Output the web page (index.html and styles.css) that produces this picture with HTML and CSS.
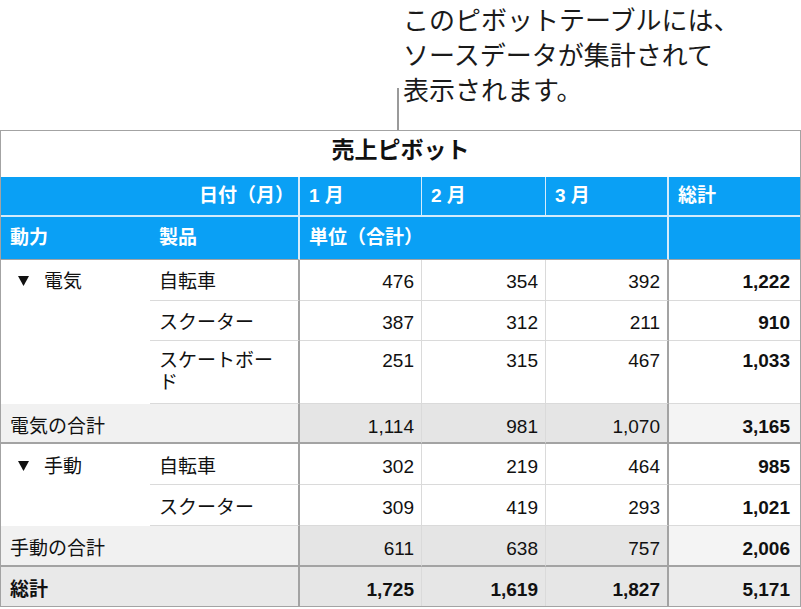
FILE: index.html
```html
<!DOCTYPE html>
<html lang="ja">
<head>
<meta charset="utf-8">
<title>売上ピボット</title>
<link rel="stylesheet" href="styles.css">
</head>
<body>
<div class="callout">
  <div class="leader"></div>
  <p class="callout-text">このピボットテーブルには、<br>ソースデータが集計されて<br>表示されます。</p>
</div>
<div class="pivot">
  <div class="c title">売上ピボット</div>

  <div class="c h h1 span2 right sep-l">日付（月）</div>
  <div class="c h h1 sep-s">1 月</div>
  <div class="c h h1 sep-s">2 月</div>
  <div class="c h h1 sep-l">3 月</div>
  <div class="c h h1">総計</div>

  <div class="c h h2">動力</div>
  <div class="c h h2 sep-l">製品</div>
  <div class="c h h2 span3 sep-l">単位（合計）</div>
  <div class="c h h2"></div>

  <div class="c group r1 span-r3"><svg class="tri" width="11" height="10" viewBox="0 0 11 10"><polygon points="0,0 11,0 5.5,10"/></svg>電気</div>
  <div class="c r1 prod">自転車</div>
  <div class="c r1 num">476</div>
  <div class="c r1 num">354</div>
  <div class="c r1 num dark-r">392</div>
  <div class="c r1 num tot">1,222</div>

  <div class="c r2 prod">スクーター</div>
  <div class="c r2 num">387</div>
  <div class="c r2 num">312</div>
  <div class="c r2 num dark-r">211</div>
  <div class="c r2 num tot">910</div>

  <div class="c r3 prod">スケートボー<br>ド</div>
  <div class="c r3 num">251</div>
  <div class="c r3 num">315</div>
  <div class="c r3 num dark-r">467</div>
  <div class="c r3 num tot">1,033</div>

  <div class="c s1 sub label span2">電気の合計</div>
  <div class="c s1 sub num">1,114</div>
  <div class="c s1 sub num">981</div>
  <div class="c s1 sub num dark-r">1,070</div>
  <div class="c s1 sub num tot subtot">3,165</div>

  <div class="c group r4 span-r2"><svg class="tri" width="11" height="10" viewBox="0 0 11 10"><polygon points="0,0 11,0 5.5,10"/></svg>手動</div>
  <div class="c r4 prod">自転車</div>
  <div class="c r4 num">302</div>
  <div class="c r4 num">219</div>
  <div class="c r4 num dark-r">464</div>
  <div class="c r4 num tot">985</div>

  <div class="c r5 prod">スクーター</div>
  <div class="c r5 num">309</div>
  <div class="c r5 num">419</div>
  <div class="c r5 num dark-r">293</div>
  <div class="c r5 num tot">1,021</div>

  <div class="c s2 sub label span2">手動の合計</div>
  <div class="c s2 sub num">611</div>
  <div class="c s2 sub num">638</div>
  <div class="c s2 sub num dark-r">757</div>
  <div class="c s2 sub num tot subtot">2,006</div>

  <div class="c g grand label span2">総計</div>
  <div class="c g grand num">1,725</div>
  <div class="c g grand num">1,619</div>
  <div class="c g grand num dark-r">1,827</div>
  <div class="c g grand num tot grandtot">5,171</div>
</div>
</body>
</html>
```
FILE: styles.css
```css
html, body {
  margin: 0;
  padding: 0;
  background: #ffffff;
}

body {
  font-family: "Liberation Sans", "Noto Sans CJK JP", sans-serif;
  color: #111111;
}

.callout {
  display: flex;
  align-items: flex-end;
  height: 130px;
  padding-left: 397px;
}

.leader {
  width: 2px;
  height: 42px;
  background: #9a9a9a;
}

.callout-text {
  align-self: flex-start;
  margin: 1px 0 0 4px;
  font-family: "Noto Sans CJK JP", sans-serif;
  font-size: 26px;
  line-height: 35px;
  color: #1a1a1a;
}

.pivot {
  display: grid;
  grid-template-columns: 149px 150px 122px 124px 123px 131px;
  width: 801px;
  box-sizing: border-box;
  border: 1px solid #a3a3a3;
}

.c {
  box-sizing: border-box;
  padding: 9px 8px 8px 9px;
  font-size: 19px;
  line-height: 22px;
  border-bottom: 1px solid #dadada;
  white-space: nowrap;
}

.title {
  grid-column: 1 / -1;
  text-align: center;
  font-weight: bold;
  font-size: 23px;
  line-height: 28px;
  padding: 5px 0 13px;
  border-bottom: none;
}

.h {
  background: #0aa0f5;
  color: #ffffff;
  font-weight: bold;
}

.h1 {
  padding-top: 8px;
  padding-bottom: 8px;
  border-bottom: 2px solid #d4ecfc;
}

.h2 {
  padding-top: 10px;
  padding-bottom: 10px;
  border-bottom: 1px solid #a3a3a3;
}

.h1.sep-s {
  border-right: 1px solid #d4ecfc;
}

.h.sep-l {
  border-right: 2px solid #d4ecfc;
}

.span2 {
  grid-column: span 2;
}

.span3 {
  grid-column: span 3;
}

.right {
  text-align: right;
  padding-right: 4px;
}

/* row rhythm */
.r1 { padding-top: 11px; padding-bottom: 7px; }
.r2 { padding-top: 11px; padding-bottom: 6px; }
.r3 { padding-top: 9px; padding-bottom: 9px; }
.s1 { padding-top: 12px; padding-bottom: 4px; }
.r4 { padding-top: 12px; padding-bottom: 6px; }
.r5 { padding-top: 12px; padding-bottom: 6px; }
.s2 { padding-top: 12px; padding-bottom: 5px; }
.g  { padding-top: 12px; padding-bottom: 5px; }

.group {
  display: flex;
  align-items: flex-start;
  padding-left: 17px;
  border-bottom: none;
}

.span-r3 {
  grid-row: span 3;
}

.span-r2 {
  grid-row: span 2;
}

.tri {
  flex: none;
  margin: 5px 15px 0 0;
  fill: #111111;
}

.prod {
  border-right: 2px solid #a3a3a3;
}

.num {
  text-align: right;
  padding-right: 7px;
  border-right: 1px solid #dadada;
}

.num.dark-r {
  border-right: 2px solid #a3a3a3;
}

.num.tot {
  font-weight: bold;
  border-right: none;
  padding-right: 10px;
}

.sub {
  background: #e5e5e5;
  border-bottom: 2px solid #a3a3a3;
}

.sub.label {
  background: #f1f1f1;
  border-right: 2px solid #a3a3a3;
}

.sub.subtot {
  background: #f4f4f4;
}

.grand {
  background: #e6e6e6;
  font-weight: bold;
  border-bottom: none;
}

.grand.label {
  background: #e9e9e9;
  border-right: 2px solid #a3a3a3;
}

.grand.grandtot {
  background: #ececec;
}
```
